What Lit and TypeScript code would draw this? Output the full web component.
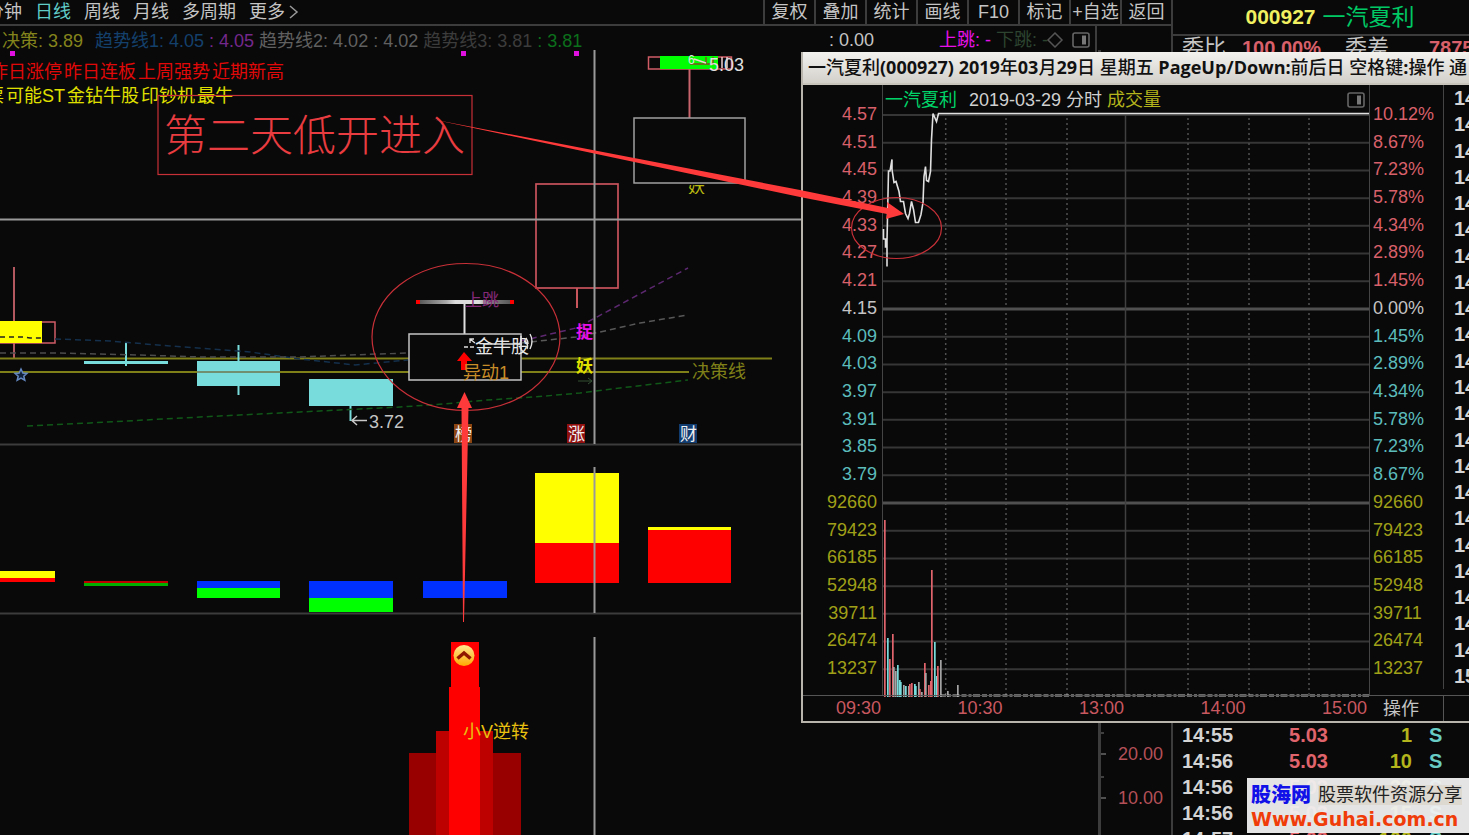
import { LitElement, html, svg, css } from "lit";
import { customElement } from "lit/decorators.js";

const PINK = "#e0646c";
const CYAN = "#78dcdc";
const GREY = "#a4a4a4";

/* ---------- intraday window ---------- */

const prices = ["4.57", "4.51", "4.45", "4.39", "4.33", "4.27", "4.21", "4.15", "4.09", "4.03", "3.97", "3.91", "3.85", "3.79"];
const percents = ["10.12%", "8.67%", "7.23%", "5.78%", "4.34%", "2.89%", "1.45%", "0.00%", "1.45%", "2.89%", "4.34%", "5.78%", "7.23%", "8.67%"];
const volumes = ["92660", "79423", "66185", "52948", "39711", "26474", "13237"];

const volumeBars: Array<[number, number, string]> = [
  [884, 519, PINK], [887, 637, CYAN], [889, 658, PINK], [892, 633, PINK], [893, 666, GREY], [895, 670, GREY],
  [897, 664, CYAN], [899, 679, CYAN], [900, 681, CYAN], [903, 684, GREY], [905, 685, CYAN], [908, 685, GREY],
  [909, 683, PINK], [911, 682, PINK], [914, 683, CYAN], [915, 685, CYAN], [918, 681, GREY], [919, 688, PINK],
  [921, 691, GREY], [924, 662, PINK], [925, 672, GREY], [928, 684, PINK], [930, 680, PINK], [931, 569, PINK],
  [934, 641, CYAN], [936, 675, CYAN], [937, 665, PINK], [940, 659, GREY], [947, 690, GREY], [957, 684, GREY],
];

const panelIcon = svg`<rect x="1" y="1" width="16" height="14" rx="2" fill="none" stroke="#666" stroke-width="1.6"></rect>
  <rect x="10" y="3.500" width="4" height="9" fill="#777"></rect>`;

@customElement("intraday-window")
export class IntradayWindow extends LitElement {
  static styles = css`
    :host { display: flex; flex-direction: column; box-sizing: border-box; background: #090909;
      border-left: 2px solid #b9b5ac; border-bottom: 2px solid #b9b5ac; overflow: hidden;
      font: 18px/20px "Liberation Sans", "Noto Sans CJK SC", sans-serif; color: #c4c4c4; }
    .title { height: 33px; margin: 0; padding-left: 5px; box-sizing: border-box; background: linear-gradient(#f3f2ef, #d3d0ca);
      border-bottom: 2px solid #c8c4bc; color: #111; font: 500 18px/31px "Open Sans", "Noto Sans CJK SC", sans-serif; white-space: nowrap; overflow: hidden; }
    .title b { font-weight: 700; }
    .body { flex: 1; display: grid; grid-template-columns: 80px 1fr 74px 26px; min-height: 0; }
    .axis { padding-top: 15px; display: flex; flex-direction: column; }
    .rows { height: 582px; display: grid; grid-auto-rows: 1fr; align-items: center; }
    .left { text-align: right; padding-right: 5px; border-right: 1px solid #444; }
    .right { padding-left: 3px; border-left: 1px solid #444; }
    .up { color: #d8606a; } .flat { color: #c4c4c4; } .down { color: #5cbcbc; } .vol { color: #a0a018; }
    .plot { display: flex; flex-direction: column; }
    .head { height: 30px; display: flex; align-items: center; padding: 0 4px 0 2px; white-space: nowrap; }
    .name { color: #00d468; width: 84px; }
    .date { width: 138px; color: #d0d0d0; }
    .kind { color: #b4b41c; flex: 1; }
    .grid { width: 100%; flex: 1; display: block; overflow: visible; }
    .foot { height: 26px; box-sizing: border-box; border-top: 1px solid #555; display: grid; grid-template-columns: 80px repeat(4, 1fr) 74px 26px;
      text-align: right; color: #c85860; line-height: 24px; }
    .foot span { padding-right: 2px; }
    .op { all: unset; color: #c4c4c4; text-align: center; padding-right: 10px; }
    .foot .edge { border-left: 1px solid #555; }
    .times { border-left: 1px solid #444; padding: 0 0 0 10px; margin: 0; list-style: none; height: 604px; display: grid; grid-auto-rows: 1fr; align-items: center;
      font-weight: bold; font-size: 20px; overflow: hidden; color: #d4d4d4; }
  `;

  private tone(i: number) {
    return i < 7 ? "up" : i === 7 ? "flat" : i < 14 ? "down" : "vol";
  }

  render() {
    const step = 582 / 21;
    return html`
      <h2 class="title">一汽夏利<b>(000927)</b> <b>2019</b>年<b>03</b>月<b>29</b>日 星期五 <b>PageUp/Down:</b>前后日 空格键<b>:</b>操作 通</h2>
      <div class="body">
        <div class="axis left"><div class="rows">
          ${[...prices, ...volumes].map((v, i) => html`<span class=${this.tone(i)}>${v}</span>`)}
        </div></div>
        <div class="plot">
          <div class="head"><span class="name">一汽夏利</span><span class="date">2019-03-29 分时</span><span class="kind">成交量</span>
            <svg width="18" height="16">${panelIcon}</svg></div>
          <svg class="grid"><g transform="translate(-883 -114)">
            ${Array.from({ length: 21 }, (_, i) => svg`<line x1="883" x2="1369" y1=${114 + i * step} y2=${114 + i * step}
              stroke=${i === 7 || i === 14 ? "#505050" : "#363636"} stroke-width=${i === 7 || i === 14 ? 3 : 2}></line>`)}
            ${[945.7, 1006, 1067, 1188, 1249, 1309].map(x => svg`<line x1=${x} x2=${x} y1="117" y2="695" stroke="#505050" stroke-width="1.500" stroke-dasharray="2 3"></line>`)}
            <line x1="1125.500" x2="1125.500" y1="114" y2="696" stroke="#404040" stroke-width="1.500"></line>
            ${volumeBars.map(([x, y, c]) => svg`<rect x=${x} y=${y} width="1.700" height=${696 - y} fill=${c}></rect>`)}
            <line x1="941" x2="1369" y1="694.500" y2="694.500" stroke="#c8c8c8" stroke-width="1.800" stroke-dasharray="5 2 3 1.500 7 2"></line>
            <path d="M883.500 228v10h2v8h1.500v19.500V240l1.500-70h1.500l2-11.500v10l2 13 2-1 3 10 1.500 10h3l2 12 2.500 5 1.500-5 2-12 2 8 2 13h3l2.500-8 2-12 1-26 1.500-10 1 14 2 1 2-10 1-32 1.500-26 3.500 8 2-8H1369"
              fill="none" stroke="#e0e0e0" stroke-width="1.600"></path>
          </g></svg>
        </div>
        <div class="axis right"><div class="rows">
          ${[...percents, ...volumes].map((v, i) => html`<span class=${this.tone(i)}>${v}</span>`)}
        </div></div>
        <ul class="times">${Array.from({ length: 23 }, (_, i) => html`<li>${i === 22 ? "15" : "14"}</li>`)}</ul>
      </div>
      <div class="foot"><span>09:30</span><span>10:30</span><span>13:00</span><span>14:00</span><span>15:00</span><button class="op">操作</button><span class="edge"></span></div>
    `;
  }
}

/* ---------- daily chart ---------- */

const bars: Array<[number, number, number, number, string]> = [
  [0, 571, 55, 7, "#ff0"], [0, 578, 55, 4, "#f00"],
  [84, 581, 84, 2, "#c00000"], [84, 583, 84, 3, "#00b000"],
  [197, 581, 83, 7, "#0030ff"], [197, 588, 83, 10, "#0f0"],
  [309, 581, 84, 17, "#0030ff"], [309, 598, 84, 14, "#0f0"],
  [423, 581, 84, 17, "#0030ff"],
  [535, 473, 84, 70, "#ff0"], [535, 543, 84, 40, "#f00"],
  [648, 527, 83, 3, "#ff0"], [648, 530, 83, 53, "#f00"],
  [409, 753, 112, 400, "#980000"], [436, 731, 57, 422, "#bd0000"],
  [449, 687, 31, 466, "#f00"], [451, 642, 28, 60, "#f00"],
];

@customElement("daily-chart")
export class DailyChart extends LitElement {
  static styles = css`
    :host { display: block; min-height: 0; overflow: hidden; }
    .canvas { display: block; width: 100%; height: 100%; font: 18px "Liberation Sans", "Noto Sans CJK SC", sans-serif; }
  `;
  render() {
    return html`<svg class="canvas">
      <defs>
        <linearGradient id="gap"><stop offset="0" stop-color="#555"></stop><stop offset=".3" stop-color="#aaa"></stop><stop offset=".4" stop-color="#ddd"></stop><stop offset=".65" stop-color="#ddd"></stop><stop offset=".75" stop-color="#888"></stop><stop offset="1" stop-color="#555"></stop></linearGradient>
        <linearGradient id="coin" x2="0" y2="1"><stop offset="0" stop-color="#ffe890"></stop><stop offset="1" stop-color="#ffa800"></stop></linearGradient>
        <clipPath id="half"><rect x="680" y="185" width="40" height="9"></rect></clipPath>
      </defs>
      <g transform="translate(0 -50)">
        <path d="M0 444.500H1098M0 613.500H1098" stroke="#3c3c3c" stroke-width="2"></path>
        ${[12, 463, 576].map(x => svg`<rect x=${x - 2} y="51" width="5" height="5" fill="#e010e0"></rect>`)}

        <path d="M14 267V358" stroke="#b45860" stroke-width="2"></path>
        <rect x="-10" y="322" width="65" height="21" fill="#090909" stroke="#d05c66" stroke-width="1.500"></rect>
        <rect x="0" y="321" width="42" height="22" fill="#ff0"></rect>
        <path d="M0 337H24L30 338H42" stroke="#222" stroke-width="1.500" stroke-dasharray="5 4" fill="none"></path>
        <path d="M0 358.500H772M0 372H689" stroke="#808018" stroke-width="2"></path>
        <path d="M84 362.500H168" stroke="${CYAN}" stroke-width="3"></path>
        <path d="M126 342V366M238.500 345V395M350.500 400V421" stroke="${CYAN}" stroke-width="2"></path>
        <rect x="197" y="361" width="83" height="25" fill="${CYAN}"></rect>
        <path d="M197 372H280" stroke="#6f8f70" stroke-width="2"></path>
        <rect x="309" y="379" width="84" height="27" fill="${CYAN}"></rect>
        <g fill="none" stroke-width="1.500" stroke-dasharray="6 4">
          <path d="M55 339L110 341 170 346 250 352 300 359 355 365 408 360" stroke="#14304c"></path>
          <path d="M0 353H60L140 355 200 357H300L350 355 408 353" stroke="#4c4c4c"></path>
          <path d="M27 426L90 423 200 417 300 412 400 407 443 404 487 400 533 397 580 393 620 388 688 380" stroke="#105818"></path>
          <path d="M521 341L576 328 595 318 688 268" stroke="#5c2870"></path>
          <path d="M521 343L576 337 600 332 640 323 688 315" stroke="#585858"></path>
        </g>
        <path d="M21 369l1.800 4 4.200.4-3.200 2.800 1 4-3.800-2.200-3.800 2.200 1-4-3.200-2.800 4.200-.4z" fill="#102038" stroke="#6488c0" stroke-width="1.500"></path>
        <path d="M353 420.500H367M357 416L352 420.500 357 425" stroke="#c8c8c8" stroke-width="1.500" fill="none"></path>
        <text x="369" y="428" fill="#c4c4c4">3.72</text>

        <path d="M464.500 303V334" stroke="#e0e0e0" stroke-width="2"></path>
        <rect x="409" y="334" width="112" height="46" fill="#090909" stroke="#c4c4c4" stroke-width="1.500"></rect>
        <rect x="418" y="300" width="94" height="4" fill="url(#gap)"></rect>
        <text x="465" y="306" font-size="17" fill="#842878">上跳</text>
        <path d="M416 302h4M510 302h4" stroke="#f00" stroke-width="4"></path>
        <text x="475" y="353" fill="#e8e8e8">金牛股</text>
        <path d="M464 347h4M470 347h4M470 339l5 4M470 343v-4h4M484 344H522M521 336v13M524 341q5 2 3 8M526 338q2 3 2 6M530 334q4 7 0 15" stroke="#e0e0e0" stroke-width="1.400" fill="none"></path>
        <path d="M464 352l8 9h-5v9h-6v-9h-4z" fill="#f00"></path>
        <text x="463" y="379" fill="#c88c28">异动1</text>

        <rect x="536" y="184" width="82" height="104" fill="none" stroke="#c8545c" stroke-width="1.700"></rect>
        <path d="M577 288V308" stroke="#c8545c" stroke-width="2"></path>
        <text x="576" y="338" fill="#e810e8" font-weight="bold" font-size="17">捉</text>
        <text x="576" y="372" fill="#e0e000" font-weight="bold" font-size="17">妖</text>
        <path d="M578 381H592M588 378l4 3-4 3" stroke="#355035" fill="none"></path>
        <text x="692" y="378" fill="#808018">决策线</text>

        ${([[454, "榜", "#8c4410"], [567, "涨", "#901010"], [679, "财", "#103c70"]] as Array<[number, string, string]>).map(([x, t, c]) => svg`
          <rect x=${x} y="424" width="18" height="19" fill=${c}></rect><text x=${x + 1} y="440" font-size="17" fill="#f0f0f0">${t}</text>`)}

        <rect x="648.500" y="57" width="83" height="12" fill="none" stroke="#d05c66" stroke-width="1.500"></rect>
        <rect x="660" y="56" width="58" height="13" fill="#0f0"></rect>
        <path d="M690 64h24M706 57v6M713 57v6" stroke="#805020" stroke-width="1.500"></path>
        <text x="688" y="64" font-size="12" fill="#e0e0e0">6</text>
        <path d="M694 59L706 63M722 57v11M727 57v11" stroke="#f0d0d0" stroke-width="1.500"></path>
        <text x="709" y="71" fill="#e0e0e0">5.03</text>
        <path d="M689.500 69V118" stroke="#c8646c" stroke-width="2"></path>
        <rect x="634" y="118" width="111" height="65" fill="none" stroke="#a0a0a0" stroke-width="1.500"></rect>
        <text x="688" y="193" font-size="17" fill="#b8b810" clip-path="url(#half)">妖</text>

        ${bars.map(([x, y, w, h, c]) => svg`<rect x=${x} y=${y} width=${w} height=${h} fill=${c}></rect>`)}
        <circle cx="464" cy="655.500" r="10.500" fill="url(#coin)"></circle>
        <path d="M457.500 658.500L464 653 470.500 658.500" stroke="#901800" stroke-width="3.500" fill="none"></path>
        <text x="463" y="738" fill="#e8c010">小V逆转</text>

        <path d="M0 219.500H801M594.500 50V444M594.500 467V613M594.500 637V1300" stroke="#999" stroke-width="2"></path>
      </g>
    </svg>`;
  }
}

/* ---------- tick list ---------- */

const ticks = [["14:55", "5.03", "1"], ["14:56", "5.03", "10"], ["14:56", "5.03", "20"], ["14:56", "5.03", "15"], ["14:57", "5.03", "100"]];

@customElement("quote-panel")
export class QuotePanel extends LitElement {
  static styles = css`
    :host { display: grid; grid-template-rows: 36px 1fr 113px; min-height: 0; overflow: hidden; border-left: 2px solid #3c3c3c;
      font: 22px/24px "Liberation Sans", "Noto Sans CJK SC", sans-serif; color: #c4c4c4; }
    .head { margin: 0; display: flex; gap: 7px; align-items: center; justify-content: center; padding-left: 18px; border-bottom: 2px solid #3c3c3c; font-size: 23px; font-weight: 400; color: #00c864; white-space: nowrap; }
    .head b { color: #f0f060; font-size: 21px; }
    .diff { display: grid; grid-template-columns: 60px 103px 84px auto; padding-left: 9px; white-space: nowrap; overflow: hidden; align-content: start; }
    .diff b { color: #d8606a; font-size: 20px; }
    table { width: 100%; border-collapse: collapse; table-layout: fixed; font-weight: bold; font-size: 20px; color: #d4d4d4; }
    td { padding: 0; height: 26px; box-sizing: border-box; }
    .time { padding-left: 9px; width: 93px; }
    .price { width: 62px; text-align: right; color: #e0646c; }
    .num { width: 84px; text-align: right; color: #b4b41c; }
    .side { padding-left: 17px; color: #68ccc4; }
  `;
  render() {
    return html`
      <h1 class="head"><b>000927</b>一汽夏利</h1>
      <div class="diff"><span>委比</span><b>100.00%</b><span>委差</span><b>7875</b></div>
      <table><tbody>${ticks.map(([t, p, v]) => html`<tr><td class="time">${t}</td><td class="price">${p}</td><td class="num">${v}</td><td class="side">S</td></tr>`)}</tbody></table>
    `;
  }
}

/* ---------- page ---------- */

@customElement("app-root")
export class AppRoot extends LitElement {
  static styles = css`
    :host { display: grid; grid-template-columns: 1fr 298px; height: 100vh; position: relative; overflow: hidden; background: #090909;
      font: 18px/24px "Liberation Sans", "Noto Sans CJK SC", sans-serif; color: #c4c4c4; }
    .main { display: grid; grid-template-rows: 26px 24px 1fr; min-width: 0; min-height: 0; }
    .bar { display: flex; justify-content: space-between; border-bottom: 2px solid #3c3c3c; box-sizing: border-box; white-space: nowrap; overflow: hidden; }
    button { all: unset; box-sizing: border-box; white-space: nowrap; }
    .periods { display: flex; gap: 13px; margin-left: -14px; line-height: 22px; }
    .periods .on { color: #60ccc8; }
    .more { display: flex; align-items: center; gap: 4px; }
    .tools { display: flex; line-height: 22px; }
    .tools button { width: 51px; border-left: 2px solid #3c3c3c; text-align: center; }
    .info { display: flex; gap: 5px; padding-left: 2px; line-height: 30px; white-space: nowrap; }
    .dec { color: #84841c; width: 88px; } .b { color: #14406c; } .p { color: #74288c; } .g { color: #606060; } .d { color: #3c3c3c; } .gr { color: #0c701c; }
    .extra { display: flex; height: 28px; margin-left: auto; align-items: center; padding-right: 5px; margin-right: 74px; border-right: 2px solid #3c3c3c; }
    .zero { width: 110px; } .jump { color: #e810e8; width: 57px; } .drop { color: #2c4430; width: 50px; }
    .extra svg { margin-right: 8px; } .extra svg:last-child { margin-right: 0; }
    .lower { display: grid; grid-template-columns: 1fr 73px; min-height: 0; position: relative; }
    .scale { border-left: 3px solid #3c3c3c; overflow: hidden; display: flex; flex-direction: column; justify-content: flex-end; color: #b45058; }
    .scale span { height: 44px; line-height: 44px; text-align: right; padding-right: 8px; background: linear-gradient(#505050, #505050) 0 50% / 5px 2px no-repeat, linear-gradient(#404040, #404040) 0 0 / 3px 2px no-repeat; }
    .scale i { height: 15px; }
    .tags { position: absolute; left: 0; top: 10px; }
    .tags div { display: flex; gap: 2px; white-space: nowrap; }
    .tags .red { color: #e00808; margin-left: -10px; }
    .tags .yel { color: #e0e000; margin-left: -14px; }
    intraday-window { position: absolute; right: 0; bottom: 112px; width: 668px; height: 671px; }
    .marks { position: absolute; inset: 0; width: 100%; height: 100%; pointer-events: none; font: 300 43px "Noto Sans CJK SC", sans-serif; }
    .brand { position: absolute; right: 0; bottom: 2px; width: 222px; height: 55px; box-sizing: border-box; padding: 4px 4px 0; background: rgba(240, 240, 240, .95); text-decoration: none; display: grid; grid-template-rows: 26px 22px; }
    .line { display: flex; gap: 7px; align-items: center; white-space: nowrap; color: #222; }
    .line b { color: #1010e8; font-size: 20px; font-weight: 900; }
    .line span { background: #ddd8d0; line-height: 20px; }
    .url { font: bold 19px/22px "DejaVu Sans", sans-serif; color: #f03c08; }
  `;
  render() {
    return html`
      <main class="main">
        <nav class="bar">
          <div class="periods">
            <button>分钟</button><button class="on">日线</button><button>周线</button><button>月线</button><button>多周期</button>
            <button class="more">更多<svg width="10" height="14"><path d="M1 1l7 6-7 6" fill="none" stroke="#999" stroke-width="1.500"></path></svg></button>
          </div>
          <div class="tools">${["复权", "叠加", "统计", "画线", "F10", "标记", "+自选", "返回"].map(t => html`<button>${t}</button>`)}</div>
        </nav>
        <div class="info">
          <span class="dec">决策: 3.89</span><span class="b">趋势线1: 4.05</span><span class="p">: 4.05</span>
          <span class="g">趋势线2: 4.02</span><span class="g">: 4.02</span><span class="d">趋势线3: 3.81</span><span class="gr">: 3.81</span>
          <div class="extra"><span class="zero">: 0.00</span><span class="jump">上跳: -</span><span class="drop">下跳: -</span>
            <svg width="18" height="16"><path d="M9 1l7 7-7 7-7-7z" fill="none" stroke="#555" stroke-width="1.500"></path></svg>
            <svg width="18" height="16">${panelIcon}</svg></div>
        </div>
        <section class="lower">
          <daily-chart></daily-chart>
          <div class="scale"><span>20.00</span><span>10.00</span><i></i></div>
          <div class="tags">
            <div class="red"><span>昨日涨停</span><span>昨日连板</span><span>上周强势</span><span>近期新高</span></div>
            <div class="yel"><span>票</span><span>可能ST</span><span>金钻牛股</span><span>印钞机</span><span>最牛</span></div>
          </div>
        </section>
      </main>
      <quote-panel></quote-panel>
      <intraday-window></intraday-window>
      <svg class="marks">
        <g fill="none" stroke="#c83038" stroke-width="1.200">
          <rect x="158" y="95.500" width="314" height="79"></rect>
          <ellipse cx="466" cy="337" rx="94" ry="73.500"></ellipse>
          <ellipse cx="896.500" cy="228" rx="45" ry="30.500"></ellipse>
        </g>
        <text x="164" y="151" fill="#e83c40">第二天低开进入</text>
        <path d="M431 119L800 190 888 208 887 202 904 214 886 219 887 214 800 197z" fill="#ff3a3a"></path>
        <path d="M464.500 392L472 408H468.500L464 622H463L461.500 408H457z" fill="#ff3a3a"></path>
      </svg>
      <a class="brand" href="#"><span class="line"><b>股海网</b><span>股票软件资源分享</span></span><span class="url">Www.Guhai.com.cn</span></a>
    `;
  }
}
